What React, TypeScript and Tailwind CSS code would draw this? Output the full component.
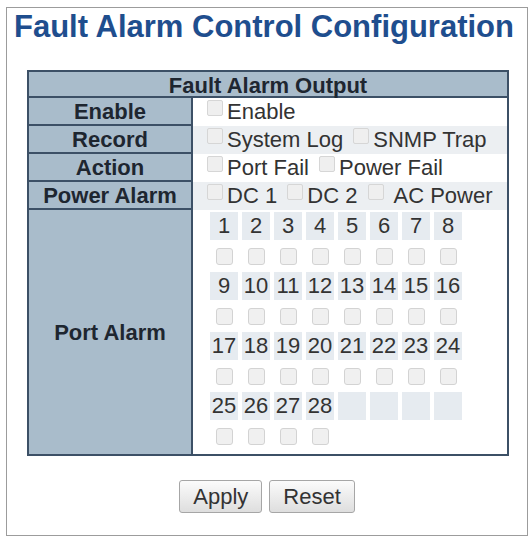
const Box = ({ className = "" }: { className?: string }) => (
  <span
    className={`inline-block w-[16px] h-[16px] border border-[#d6d6d6] bg-[#efefef] rounded-[2px] align-[3px] ${className}`}
  />
);

const labelCell =
  "h-[28px] bg-[#a9bccb] border-r-2 border-b-2 border-[#3c5066] text-center font-bold text-[#1e2630] leading-[28px]";

const App = () => {
  const portRows = [
    [1, 2, 3, 4, 5, 6, 7, 8],
    [9, 10, 11, 12, 13, 14, 15, 16],
    [17, 18, 19, 20, 21, 22, 23, 24],
    [25, 26, 27, 28],
  ];

  return (
    <div
      className="w-[531px] h-[540px] bg-white pt-[7px] pl-[6px]"
      style={{ fontFamily: '"Liberation Sans", Arial, sans-serif' }}
    >
      <div className="w-[522px] h-[529px] border border-[#9c9c9c]">
        <h1 className="mt-[1px] pl-[7px] text-[31px] font-bold leading-[36px] text-[#1f4e8e] whitespace-nowrap">
          Fault Alarm Control Configuration
        </h1>

        <div className="ml-[20px] mt-[25px] w-[482px] border-2 border-[#3c5066] grid grid-cols-[164px_1fr] text-[22px]">
          <div className="col-span-2 h-[26px] bg-[#a9bccb] border-b-2 border-[#3c5066] text-center font-bold text-[#1e2630] leading-[28px]">
            Fault Alarm Output
          </div>

          <div className={labelCell}>Enable</div>
          <div className="h-[28px] bg-white pl-[10px] leading-[28px] text-[#333] whitespace-nowrap">
            <Box className="ml-[4px] mr-[4px]" />
            Enable
          </div>

          <div className={labelCell}>Record</div>
          <div className="h-[28px] bg-[#eceff2] pl-[10px] leading-[28px] text-[#333] whitespace-nowrap">
            <Box className="ml-[4px] mr-[4px]" />
            System Log <Box className="ml-[4px] mr-[4px]" />
            SNMP Trap
          </div>

          <div className={labelCell}>Action</div>
          <div className="h-[28px] bg-white pl-[10px] leading-[28px] text-[#333] whitespace-nowrap">
            <Box className="ml-[4px] mr-[4px]" />
            Port Fail <Box className="ml-[4px] mr-[4px]" />
            Power Fail
          </div>

          <div className={labelCell}>Power Alarm</div>
          <div className="h-[28px] bg-[#eceff2] pl-[10px] leading-[28px] text-[#333] whitespace-nowrap">
            <Box className="ml-[4px] mr-[4px]" />
            DC 1 <Box className="ml-[4px] mr-[4px]" />
            DC 2 <Box className="ml-[4px] mr-[10px]" />
            AC Power
          </div>

          <div className="h-[244px] bg-[#a9bccb] border-r-2 border-[#3c5066] flex items-center justify-center font-bold text-[#1e2630]">
            Port Alarm
          </div>
          <div className="h-[244px] bg-white pl-[17px] pt-[2px]">
            {portRows.map((row, ri) => (
              <div key={ri}>
                <div className="flex gap-[4px] h-[28px]">
                  {Array.from({ length: 8 }).map((_, ci) => (
                    <div
                      key={ci}
                      className="w-[28px] h-[28px] bg-[#e6ebf0] text-center leading-[28px] text-[#333]"
                    >
                      {row[ci] ?? ""}
                    </div>
                  ))}
                </div>
                <div className="flex gap-[4px] h-[32px] items-center">
                  {row.map((n) => (
                    <div key={n} className="w-[28px] flex justify-center">
                      <span className="block w-[17px] h-[17px] border border-[#d3d3d3] bg-[#f0f0f0] rounded-[3px]" />
                    </div>
                  ))}
                </div>
              </div>
            ))}
          </div>
        </div>

        <div className="mt-[24px] flex justify-center gap-[7px]">
          <button className="h-[33px] px-[13px] border border-[#a6a6a6] rounded-[3px] bg-gradient-to-b from-[#fbfbfb] to-[#dedede] text-[22px] leading-none text-[#333]">
            Apply
          </button>
          <button className="h-[33px] px-[13px] border border-[#a6a6a6] rounded-[3px] bg-gradient-to-b from-[#fbfbfb] to-[#dedede] text-[22px] leading-none text-[#333]">
            Reset
          </button>
        </div>
      </div>
    </div>
  );
};

export default App;
